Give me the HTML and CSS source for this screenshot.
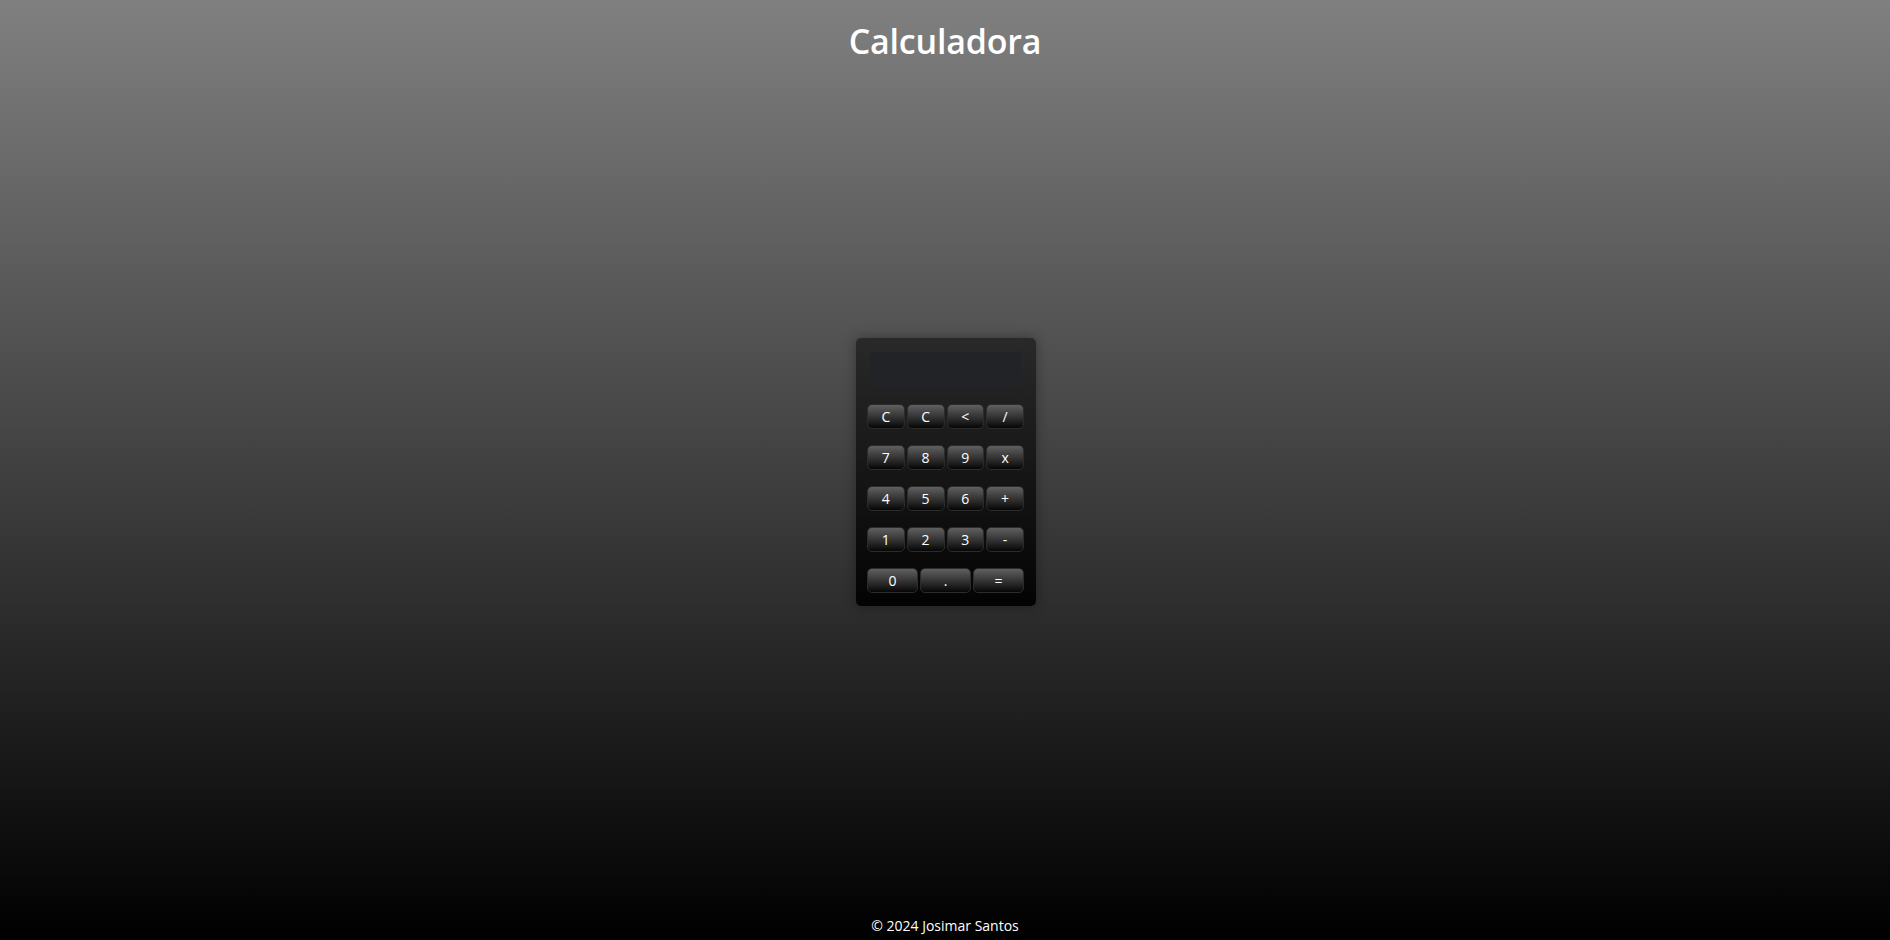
FILE: index.html
```html
<!DOCTYPE html>
<html lang="pt-BR">
<head>
<meta charset="utf-8">
<title>Calculadora</title>
<link rel="stylesheet" href="styles.css">
</head>
<body>
<header class="top">
  <h1 class="title">Calculadora</h1>
</header>
<main class="main">
  <div class="calc">
    <div class="display"></div>
    <div class="keys">
      <button class="key">C</button>
      <button class="key">C</button>
      <button class="key">&lt;</button>
      <button class="key">/</button>
      <button class="key">7</button>
      <button class="key">8</button>
      <button class="key">9</button>
      <button class="key">x</button>
      <button class="key">4</button>
      <button class="key">5</button>
      <button class="key">6</button>
      <button class="key">+</button>
      <button class="key">1</button>
      <button class="key">2</button>
      <button class="key">3</button>
      <button class="key">-</button>
    </div>
    <div class="keys keys-last">
      <button class="key">0</button>
      <button class="key">.</button>
      <button class="key">=</button>
    </div>
  </div>
</main>
<footer class="foot">© 2024 Josimar Santos</footer>
</body>
</html>
```

FILE: styles.css
```css
html, body {
  margin: 0;
  padding: 0;
}
body {
  height: 940px;
  display: flex;
  flex-direction: column;
  background: linear-gradient(to bottom, #808080 0%, #000000 100%);
  font-family: "Open Sans", "Noto Sans", "Liberation Sans", sans-serif;
  color: #ffffff;
}
.top {
  display: flex;
  justify-content: center;
  padding-top: 16px;
}
.title {
  margin: 0;
  font-size: 34px;
  font-weight: 600;
  line-height: 50px;
  letter-spacing: -0.2px;
}
.main {
  flex: 1;
  display: flex;
  justify-content: center;
  align-items: center;
  padding-bottom: 40px;
  padding-left: 2px;
}
.calc {
  width: 157px;
  padding: 14px 12px 13px 11px;
  border-radius: 5px;
  background: linear-gradient(to bottom, #292929 0%, #030303 100%);
  box-shadow: 0 0 12px rgba(0, 0, 0, 0.35);
}
.display {
  height: 36px;
  margin: 0 3px 16px 3px;
  border-radius: 4px;
  background: #212327;
}
.keys {
  display: grid;
  grid-template-columns: repeat(4, 1fr);
  column-gap: 2px;
  row-gap: 16px;
}
.keys-last {
  grid-template-columns: repeat(3, 1fr);
  margin-top: 16px;
}
.key {
  height: 25px;
  padding: 0;
  border: 1px solid #2c2c2c;
  border-radius: 5px;
  background: linear-gradient(to bottom, #606060 0%, #2c2c2c 60%, #060606 100%);
  color: #ffffff;
  font-family: "Open Sans", "Noto Sans", "Liberation Sans", sans-serif;
  font-size: 14px;
  line-height: 23px;
}
.foot {
  text-align: center;
  font-size: 14px;
  line-height: 18px;
  padding-bottom: 5px;
}
```
